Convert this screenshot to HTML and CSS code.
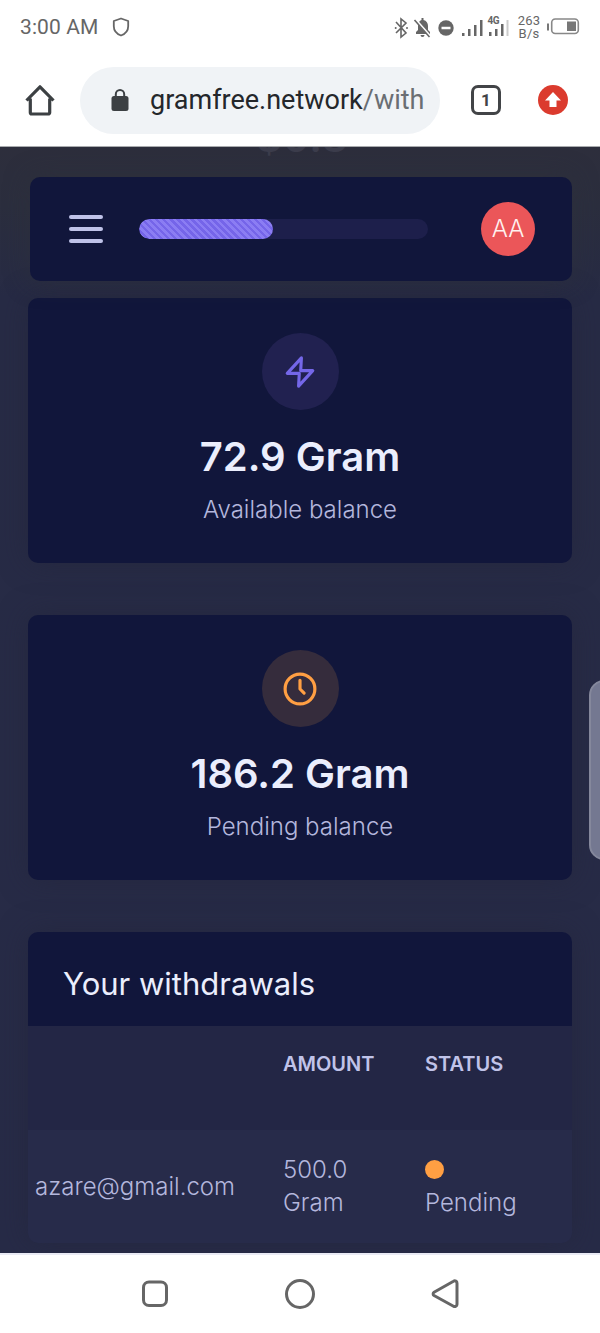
FILE: index.html
```html
<!DOCTYPE html>
<html lang="en">
<head>
<meta charset="utf-8">
<title>Gram withdrawals</title>
<link rel="stylesheet" href="styles.css">
</head>
<body>
<div class="phone">
  <header class="status-bar">
    <span class="clock">3:00 AM</span>
    <svg class="shield" width="18" height="20" viewBox="0 0 18 20"><path d="M9 1.5 16.2 4v5.2c0 4.4-3 7.7-7.2 9.3-4.2-1.6-7.2-4.9-7.2-9.3V4Z"/></svg>
    <svg class="system-icons" width="120" height="26" viewBox="392 13 120 26">
      <path class="thin" d="m396 21 10 11-5 4V18l5 4-10 10"/><circle cx="395.700" cy="27" r="1"/><circle cx="407" cy="27" r="1"/>
      <path d="M416 33v-2l2-2v-4c0-3 1.500-5.500 3.500-6v-2h2v2c3 .8 4.500 3 4.500 6v4l2 2v2ZM420.500 34h4a2 2 0 0 1-4 0Z"/>
      <path class="slash" d="m415 18 15 17"/><path class="thin" d="m414.500 19 15 17"/>
      <circle cx="446" cy="27" r="7.700"/><path class="minus" d="M441.500 27h9"/>
      <path d="M462 32h2.500v3H462ZM468 28h2.500v7H468ZM474 24h2.500v11H474ZM480 19h2.500v16H480ZM489 31h2.500v4H489ZM495 28h2.500v7H495ZM501 23h2.500v12H501Z"/><path class="faint" d="M506.500 19h2v16h-2Z"/>
      <text x="487.500" y="23" textLength="12">4G</text>
    </svg>
    <span class="speed">263<br>B/s</span>
    <svg class="battery" width="34" height="18" viewBox="546 18 34 18"><path d="M547 23.500h2v7h-2Z"/><rect class="case" x="551.700" y="19" width="26.600" height="14.500" rx="3.500"/><rect x="567" y="21.500" width="9" height="9.500"/></svg>
  </header>
  <div class="browser-bar">
    <svg class="home" width="32" height="32" viewBox="0 0 32 32"><path d="M2.500 16.500 16 2.800l13.500 13.700M6.300 14.500v14a1.500 1.500 0 0 0 1.500 1.500h16.400a1.500 1.500 0 0 0 1.500-1.500v-14"/></svg>
    <div class="address">
      <svg class="lock" width="18" height="24" viewBox="0 0 18 24"><rect x=".5" y="8" width="17" height="15" rx="2.500"/><path d="M4.800 9V6.200a4.200 4.200 0 0 1 8.400 0V9"/></svg>
      <span class="url">gramfree.network<span class="path">/withdraw</span></span>
    </div>
    <span class="tabs">1</span>
    <svg class="update" width="30" height="30" viewBox="0 0 30 30"><circle cx="15" cy="15" r="15"/><path d="m15 7 8 8.500h-4.500V22h-7v-6.500H7Z"/></svg>
  </div>

  <main class="page">
    <span class="ghost">$0.8</span>
    <nav class="topbar">
      <div class="burger"><i></i><i></i><i></i></div>
      <div class="progress"><div class="progress-fill"></div></div>
      <span class="avatar">AA</span>
    </nav>
    <section class="card">
      <div class="badge violet"><svg width="34" height="34" viewBox="0 0 24 24"><path d="M13 2 3 13h8.500L11 22l10-11h-8.500L13 2Z"/></svg></div>
      <h2 class="value available">72.9 Gram</h2>
      <p class="label available-label">Available balance</p>
    </section>
    <section class="card">
      <div class="badge amber"><svg width="38" height="38" viewBox="0 0 24 24"><circle cx="12" cy="12" r="9.400"/><path d="M12 6.500V12l2.600 2.600"/></svg></div>
      <h2 class="value pending">186.2 Gram</h2>
      <p class="label pending-label">Pending balance</p>
    </section>
    <section class="withdrawals">
      <h3 class="title"><span>Your withdrawals</span></h3>
      <div class="row head"><span></span><span class="amount-head">Amount</span><span class="status-head">Status</span></div>
      <div class="row entry">
        <span class="email">azare@gmail.com</span>
        <span class="amount">500.0<br>Gram</span>
        <span class="state"><i class="dot"></i>Pending</span>
      </div>
    </section>
    <div class="edge-handle"></div>
  </main>

  <footer class="system-nav">
    <svg width="30" height="30" viewBox="0 0 30 30"><rect x="3.500" y="3" width="23" height="23.500" rx="5.500"/></svg>
    <svg width="30" height="30" viewBox="0 0 30 30"><circle cx="15" cy="15" r="13.500"/></svg>
    <svg width="30" height="30" viewBox="0 0 30 30"><path d="M4 13.300 23.500 2.200a2.300 2.300 0 0 1 3.500 2v21a2.300 2.300 0 0 1-3.500 2L4 16.500a1.900 1.900 0 0 1 0-3.200Z"/></svg>
  </footer>
</div>
</body>
</html>
```
FILE: styles.css
```css
* { box-sizing: border-box; }
body { margin: 0; background: #fff; font-family: Inter, "Noto Sans", sans-serif; }
h2, h3, p { margin: 0; font-weight: 400; }
svg { display: block; flex: none; }
.phone { width: 600px; height: 1333px; display: flex; flex-direction: column; overflow: hidden; }

.status-bar { height: 54px; flex: none; display: flex; align-items: center; padding: 0 20px; font-family: Roboto, sans-serif; color: #666; }
.clock { font-size: 21px; width: 76px; white-space: nowrap; letter-spacing: .1px; }
.shield { margin-left: 16px; fill: none; stroke: #666; stroke-width: 1.8; stroke-linejoin: round; }
.system-icons { margin-left: 262px; fill: #666; font: 700 10px Roboto, sans-serif; }
.thin { fill: none; stroke: #666; stroke-width: 1.6; }
.slash { fill: none; stroke: #fff; stroke-width: 2.5; }
.minus { stroke: #fff; stroke-width: 2.5; }
.faint { fill: #ccc; }
.speed { width: 28px; margin-left: 3px; font-size: 13px; line-height: 13px; text-align: center; letter-spacing: .2px; }
.battery { margin-left: 3px; fill: #777; }
.case { fill: none; stroke: #888; stroke-width: 1.6; }

.browser-bar { height: 93px; flex: none; display: flex; align-items: center; padding-left: 24px; border-bottom: 1px solid #a9abae; }
.home { fill: none; stroke: #3c4043; stroke-width: 3.2; stroke-linejoin: round; }
.address { width: 360px; height: 67px; margin-left: 24px; border-radius: 34px; background: #f0f3f6; display: flex; align-items: center; padding: 0 16px 0 31px; }
.lock { fill: #3c4043; }
.lock path { fill: none; stroke: #3c4043; stroke-width: 2; }
.url { margin-left: 21px; width: 274px; overflow: hidden; white-space: nowrap; font: 27px/36px Roboto, sans-serif; color: #24272b; }
.path { color: #6a6e73; }
.tabs { width: 30px; height: 30px; margin-left: 31px; border: 3px solid #424447; border-radius: 7px; font: 700 17px/24px Roboto, sans-serif; text-align: center; color: #424447; }
.update { margin-left: 37px; fill: #db3b2e; }
.update path { fill: #fff; }

.page { height: 1106px; flex: none; position: relative; overflow: hidden; padding: 30px 28px 0; background: linear-gradient(#2d2e3c 0, #2b2e3e 60px, #272b45 150px, #272b47 100%); }
.ghost { position: absolute; left: 256px; top: -33px; font-size: 40px; line-height: 48px; font-weight: 600; letter-spacing: 1px; color: #3c3d4c; }
.topbar { position: relative; height: 104px; margin-left: 2px; border-radius: 10px; background: #11163b; box-shadow: 0 0 24px rgba(45, 48, 58, .6); display: flex; align-items: center; padding: 0 37px 0 39px; }
.burger { width: 34px; display: grid; gap: 8px; }
.burger i { height: 4px; border-radius: 2px; background: #bfc2e8; }
.progress { width: 289px; height: 20px; margin-left: 36px; border-radius: 10px; background: #1d1f4b; overflow: hidden; }
.progress-fill { width: 134px; height: 20px; border-radius: 10px; background: repeating-linear-gradient(45deg, #7565e9 0, #7565e9 2.500px, #8b7df3 2.500px, #8b7df3 5px); }
.avatar { width: 54px; height: 54px; margin-left: auto; border-radius: 50%; background: #eb5659; color: #fff1ef; font-size: 24px; line-height: 53px; font-weight: 300; text-align: center; }

.card { height: 265px; margin-bottom: 52px; border-radius: 10px; background: #11163b; box-shadow: 0 0 28px rgba(34, 37, 59, .55); display: flex; flex-direction: column; align-items: center; padding-top: 35px; }
.topbar + .card { margin-top: 17px; }
.badge { width: 77px; height: 77px; border-radius: 50%; display: grid; place-items: center; }
.badge svg { fill: none; stroke-linecap: round; stroke-linejoin: round; }
.violet { background: #212150; }
.violet svg { stroke: #7467e8; stroke-width: 2.200; }
.amber { background: #352c3c; }
.amber svg { stroke: #ff9f43; stroke-width: 2; }
.value { margin-top: 23px; font-size: 40px; line-height: 48px; font-weight: 600; color: #ebeefd; white-space: nowrap; }
.label { margin-top: 14px; font-size: 24px; line-height: 30px; font-weight: 300; color: #b4b7dd; white-space: nowrap; }

.withdrawals { height: 311px; overflow: hidden; border-radius: 10px; box-shadow: 0 0 28px rgba(34, 37, 59, .55); background: #272b4a; }
.title { height: 94px; padding: 33px 35px 0; background: #11163b; color: #ebeefd; font-size: 31px; line-height: 38px; white-space: nowrap; }
.row { display: grid; grid-template-columns: 255px 142px 147px; color: #b4b7dd; }
.head { height: 104px; padding-top: 25px; background: #232645; font-size: 20px; line-height: 26px; font-weight: 600; text-transform: uppercase; color: #c0c3e9; }
.entry { height: 113px; padding-top: 23px; font-size: 24px; line-height: 33px; font-weight: 300; }
.email { display: flex; justify-content: flex-end; overflow: hidden; padding: 17px 48px 0 0; white-space: nowrap; }
.dot { display: block; width: 19px; height: 19px; margin: 7px 0; border-radius: 50%; background: #ff9f43; }
.edge-handle { position: absolute; left: 589px; top: 533px; width: 30px; height: 180px; border-radius: 30px; background: #747891; border: 2px solid #85889c; }

.system-nav { height: 80px; flex: none; border-top: 2px solid #e9eaf4; display: flex; justify-content: center; align-items: center; gap: 115px; }
.system-nav svg { fill: none; stroke: #666; stroke-width: 3; stroke-linejoin: round; }
```
